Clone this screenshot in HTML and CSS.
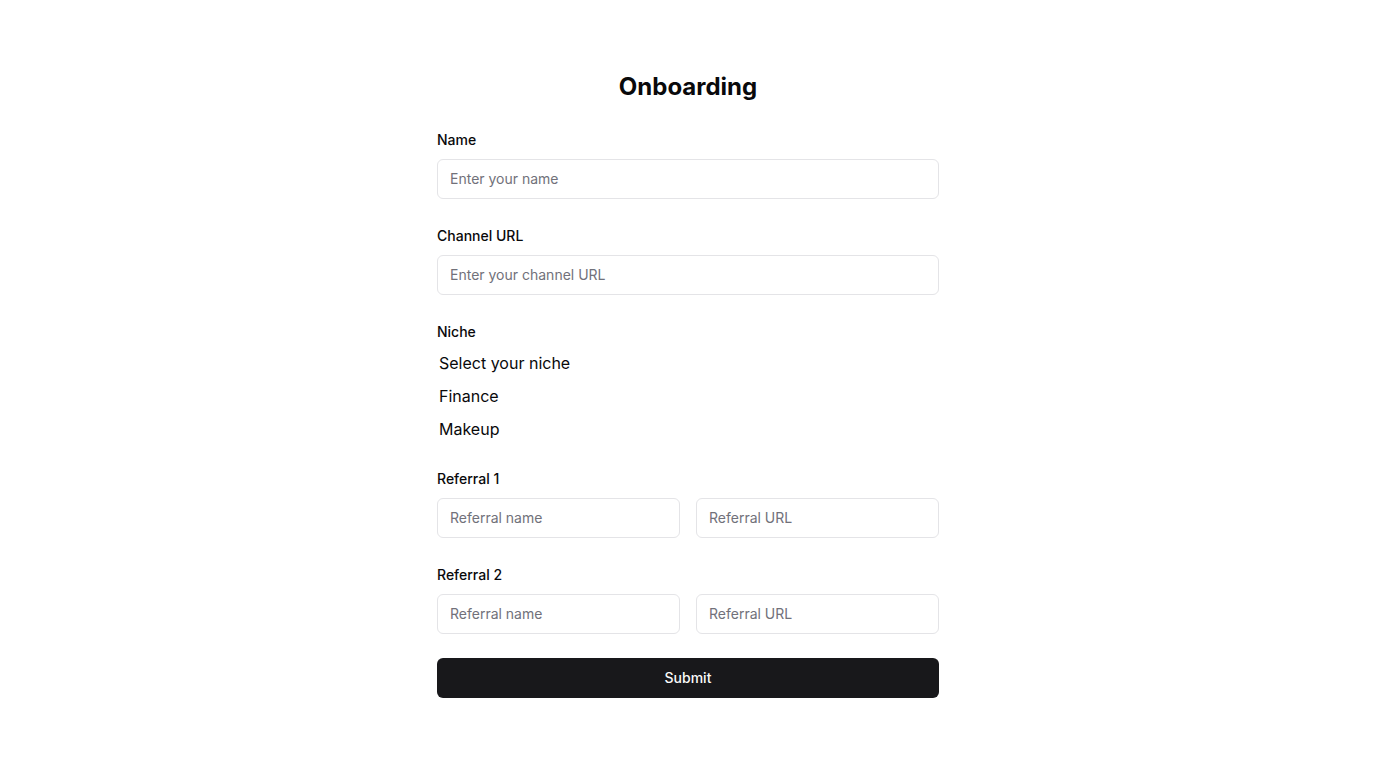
FILE: index.html
```
<!DOCTYPE html>
<html lang="en">
<head>
<meta charset="utf-8">
<title>Onboarding</title>
<link rel="stylesheet" href="styles.css">
</head>
<body>
<main class="page">
  <h1 class="title">Onboarding</h1>
  <form class="form">
    <div class="group">
      <label class="label">Name</label>
      <input class="input" type="text" placeholder="Enter your name">
    </div>
    <div class="group">
      <label class="label">Channel URL</label>
      <input class="input" type="text" placeholder="Enter your channel URL">
    </div>
    <div class="group group-niche">
      <label class="label label-niche">Niche</label>
      <div class="options">
        <div class="option">Select your niche</div>
        <div class="option">Finance</div>
        <div class="option">Makeup</div>
      </div>
    </div>
    <div class="group">
      <label class="label">Referral 1</label>
      <div class="pair">
        <input class="input" type="text" placeholder="Referral name">
        <input class="input" type="text" placeholder="Referral URL">
      </div>
    </div>
    <div class="group group-last">
      <label class="label">Referral 2</label>
      <div class="pair">
        <input class="input" type="text" placeholder="Referral name">
        <input class="input" type="text" placeholder="Referral URL">
      </div>
    </div>
    <button class="submit" type="button">Submit</button>
  </form>
</main>
</body>
</html>
```
FILE: styles.css
```
* { box-sizing: border-box; }
html, body { margin: 0; padding: 0; background: #ffffff; }
body {
  font-family: Inter, "Noto Sans", sans-serif;
  color: #09090b;
}
.page {
  width: 502px;
  margin: 0 auto;
  padding-top: 71px;
}
.title {
  margin: 0 0 27px;
  font-size: 24px;
  line-height: 32px;
  font-weight: 700;
  text-align: center;
  color: #09090b;
}
.form {
  display: flex;
  flex-direction: column;
}
.group {
  display: flex;
  flex-direction: column;
  margin-bottom: 27px;
}
.group-niche { margin-bottom: 23px; }
.group-last { margin-bottom: 24px; }
.label {
  font-size: 14px;
  line-height: 20px;
  font-weight: 500;
  margin-bottom: 9px;
}
.label-niche { margin-bottom: 5px; }
.input {
  width: 100%;
  height: 40px;
  border: 1px solid #e4e4e7;
  border-radius: 6px;
  padding: 0 12px 1px;
  font-family: inherit;
  font-size: 14px;
  color: #09090b;
  background: #ffffff;
  outline: none;
}
.input::placeholder { color: #71717a; }
.pair {
  display: grid;
  grid-template-columns: 1fr 1fr;
  gap: 16px;
}
.options {
  display: flex;
  flex-direction: column;
  padding-left: 2px;
}
.option {
  height: 33px;
  line-height: 33px;
  font-size: 16px;
  color: #09090b;
}
.submit {
  height: 40px;
  width: 100%;
  border: none;
  border-radius: 6px;
  background: #18181b;
  color: #fafafa;
  font-family: inherit;
  font-size: 14px;
  line-height: 20px;
  font-weight: 500;
  padding: 0 0 1px;
  cursor: pointer;
}
```
